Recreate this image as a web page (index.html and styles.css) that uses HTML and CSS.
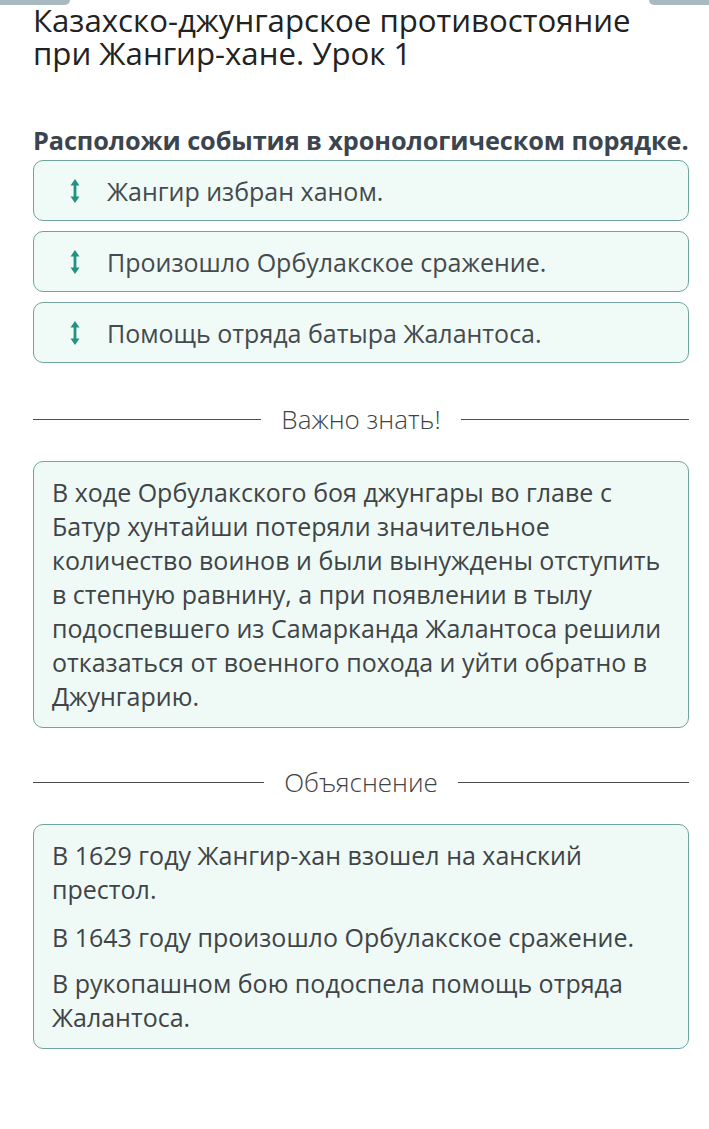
FILE: index.html
```html
<!DOCTYPE html>
<html lang="ru">
<head>
    <meta charset="UTF-8">
    <meta name="viewport" content="width=device-width, initial-scale=1.0">
    <title>Казахско-джунгарское противостояние</title>
    <link rel="stylesheet" href="styles.css">
</head>
<body>

<div class="top-bar">
    <span class="tab tab-left"></span>
    <span class="tab tab-right"></span>
</div>

<div class="container">
    <h1>Казахско-джунгарское противостояние при Жангир-хане. Урок 1</h1>

    <h2 class="task">Расположи события в хронологическом порядке.</h2>

    <ul class="order-list">
        <li class="order-item">
            <svg class="drag-icon" width="12" height="26" viewBox="0 0 12 26"><path d="M6 1 L10.5 7.5 H7.4 V18.5 H10.5 L6 25 L1.5 18.5 H4.6 V7.5 H1.5 Z" fill="#23937f"/></svg>
            <span>Жангир избран ханом.</span>
        </li>
        <li class="order-item">
            <svg class="drag-icon" width="12" height="26" viewBox="0 0 12 26"><path d="M6 1 L10.5 7.5 H7.4 V18.5 H10.5 L6 25 L1.5 18.5 H4.6 V7.5 H1.5 Z" fill="#23937f"/></svg>
            <span>Произошло Орбулакское сражение.</span>
        </li>
        <li class="order-item">
            <svg class="drag-icon" width="12" height="26" viewBox="0 0 12 26"><path d="M6 1 L10.5 7.5 H7.4 V18.5 H10.5 L6 25 L1.5 18.5 H4.6 V7.5 H1.5 Z" fill="#23937f"/></svg>
            <span>Помощь отряда батыра Жалантоса.</span>
        </li>
    </ul>

    <div class="divider"><span>Важно знать!</span></div>

    <div class="info-box">
        <p>В ходе Орбулакского боя джунгары во главе с Батур хунтайши потеряли значительное количество воинов и были вынуждены отступить в степную равнину, а при появлении в тылу подоспевшего из Самарканда Жалантоса решили отказаться от военного похода и уйти обратно в Джунгарию.</p>
    </div>

    <div class="divider"><span>Объяснение</span></div>

    <div class="info-box">
        <p>В 1629 году Жангир-хан взошел на ханский престол.</p>
        <p class="gap-lg">В 1643 году произошло Орбулакское сражение.</p>
        <p>В рукопашном бою подоспела помощь отряда Жалантоса.</p>
    </div>
</div>

</body>
</html>
```

FILE: styles.css
```css
body {
    font-family: "Open Sans", "Noto Sans", sans-serif;
    background-color: #fff;
    color: #3f4346;
    margin: 0;
    padding: 0;
}
.top-bar {
    position: relative;
    height: 0;
}
.tab {
    position: absolute;
    top: 0;
    height: 5px;
    background-color: #a9b9c1;
}
.tab-left {
    left: 0;
    width: 70px;
    border-radius: 0 0 8px 0;
}
.tab-right {
    right: 0;
    width: 60px;
    border-radius: 0 0 0 8px;
}
.container {
    padding: 4px 20px 40px 33px;
}
h1 {
    margin: 0;
    font-size: 31.2px;
    font-weight: normal;
    line-height: 33px;
    color: #222;
    max-width: 620px;
}
.task {
    margin: 55px 0 0;
    font-size: 25.3px;
    font-weight: bold;
    line-height: 30px;
    color: #3b4550;
    white-space: nowrap;
    letter-spacing: -0.1px;
}
.order-list {
    list-style: none;
    margin: 5px 0 0;
    padding: 0;
    display: flex;
    flex-direction: column;
    gap: 10px;
}
.order-item {
    display: flex;
    align-items: center;
    gap: 26px;
    height: 59px;
    padding: 0 0 0 35px;
    background-color: #f0faf7;
    border: 1px solid #6fa59c;
    border-radius: 10px;
    font-size: 25px;
    color: #444a4d;
}
.drag-icon {
    flex-shrink: 0;
}
.divider {
    display: flex;
    align-items: center;
    gap: 20px;
    margin: 38px 0 24px;
    font-size: 26px;
    font-weight: 300;
    color: #404346;
}
.divider::before,
.divider::after {
    content: '';
    flex: 1;
    border-top: 1.5px solid #4a4d50;
}
.info-box {
    background-color: #effaf6;
    border: 1px solid #6fa59c;
    border-radius: 10px;
    padding: 13px 12px 14px 18px;
    font-size: 25px;
    line-height: 34px;
    color: #404447;
}
.info-box p {
    margin: 0;
}
.info-box p + p {
    margin-top: 12px;
}
.info-box p.gap-lg {
    margin-top: 14px;
}
.info-box + .divider {
    margin-top: 36px;
}
```
